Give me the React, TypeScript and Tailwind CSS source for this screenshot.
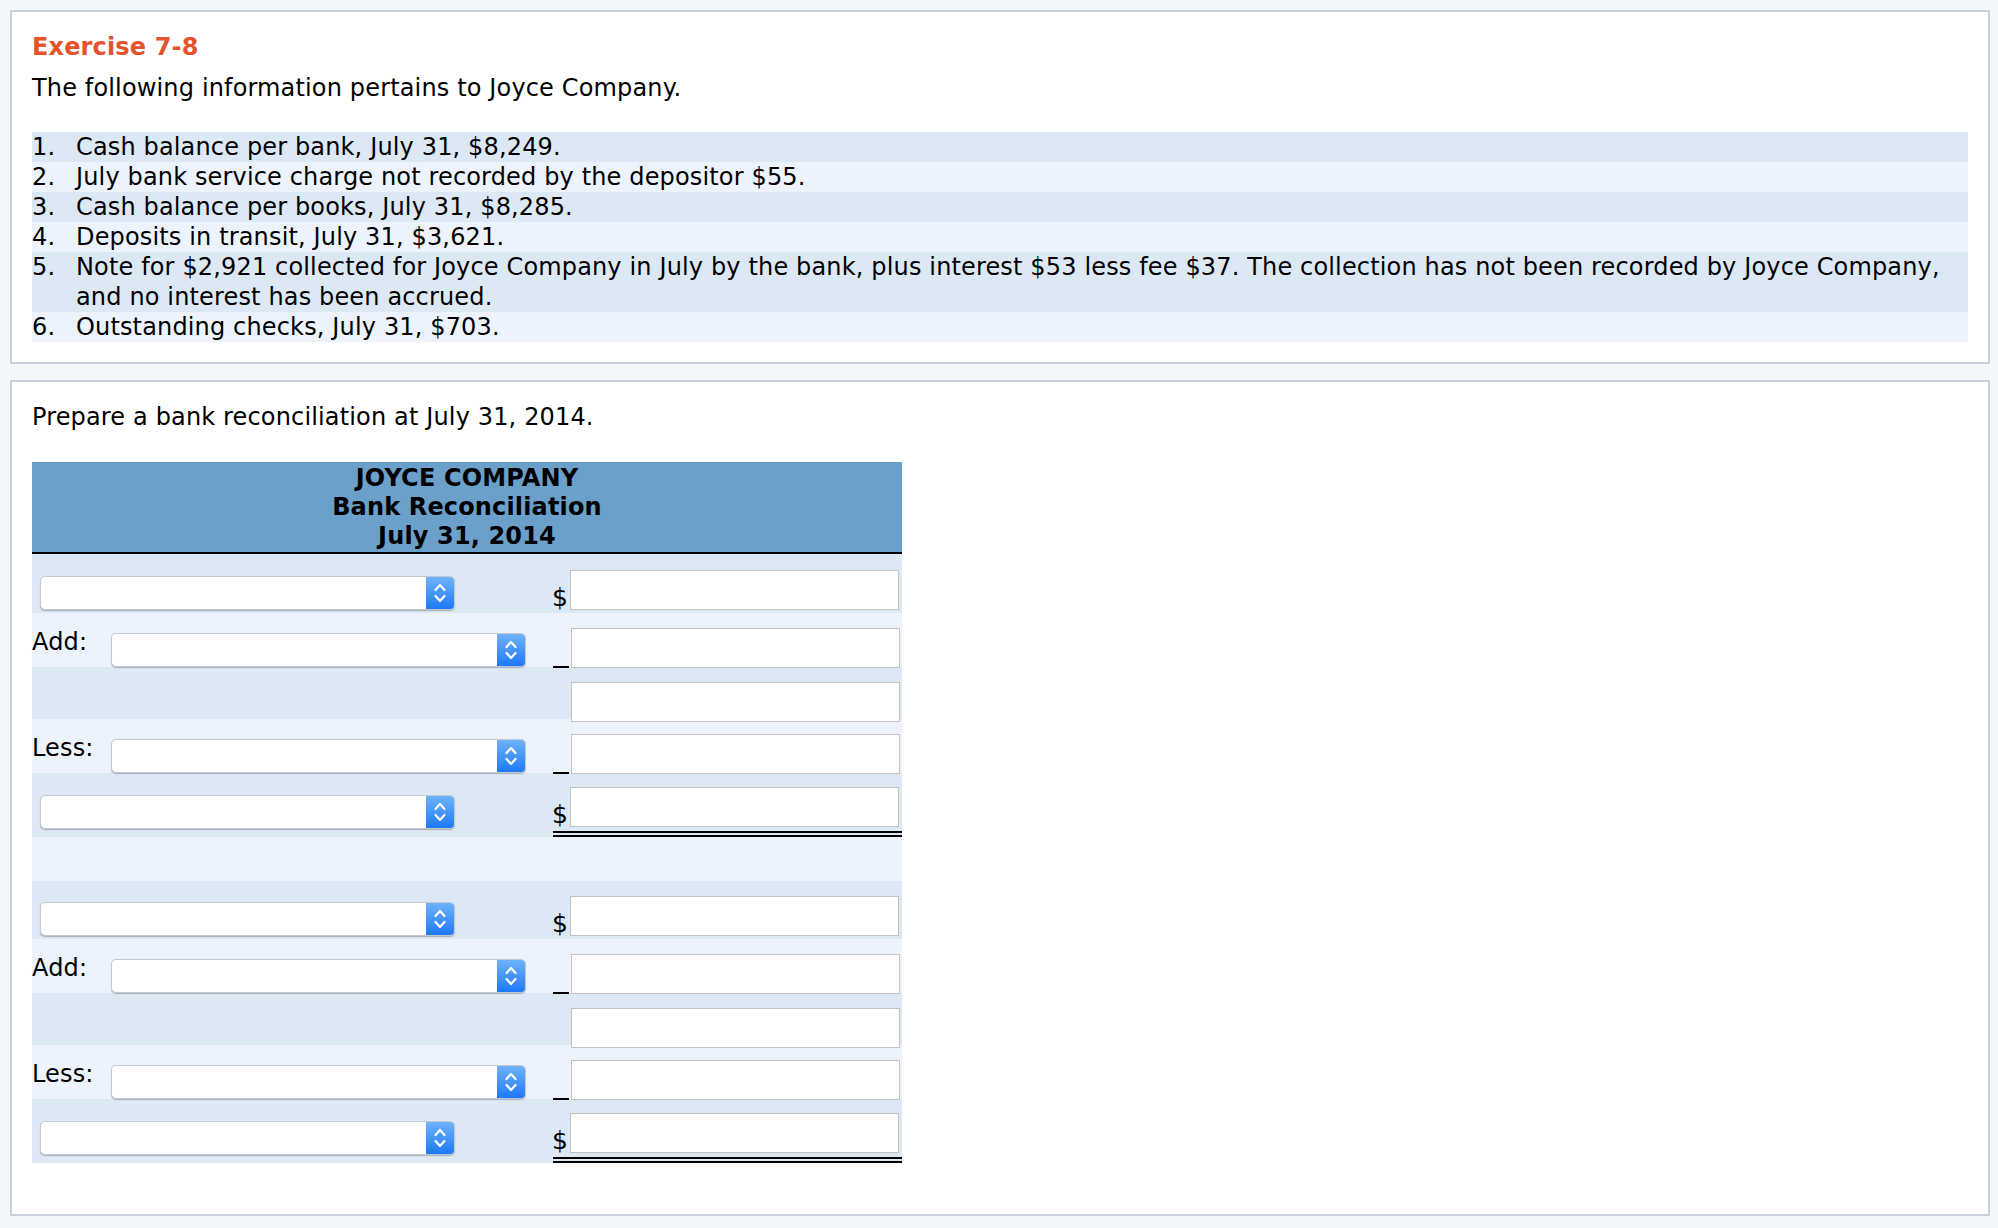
import React from "react";

const FONT = { fontFamily: '"DejaVu Sans", Verdana, sans-serif', letterSpacing: "0.15px" };

function Chevrons() {
  return (
    <svg width="14" height="24" viewBox="0 0 14 24" fill="none">
      <path d="M2.5 9 L7 4 L11.5 9" stroke="white" strokeWidth="2.2" strokeLinecap="round" strokeLinejoin="round" />
      <path d="M2.5 15 L7 20 L11.5 15" stroke="white" strokeWidth="2.2" strokeLinecap="round" strokeLinejoin="round" />
    </svg>
  );
}

function Select() {
  return (
    <div className="flex h-[34px] w-[415px] rounded-[5px] border border-[#c4c8cf] bg-white shadow-[0_1px_1px_rgba(0,0,0,0.25)] overflow-hidden">
      <div className="flex-1" />
      <div className="flex w-[28px] items-center justify-center bg-gradient-to-b from-[#6db2fb] to-[#1b78f6]">
        <Chevrons />
      </div>
    </div>
  );
}

function Input() {
  return <div className="h-[40px] w-[329px] border border-[#c2c2c2] bg-white" />;
}

type RowKind = "first" | "add" | "less" | "blank" | "total" | "empty";

function Row({ kind, h, dark }: { kind: RowKind; h: number; dark: boolean }) {
  const bg = dark ? "bg-[#dde8f5]" : "bg-[#ecf3fc]";
  if (kind === "empty") {
    return <div className={`${bg} w-[870px]`} style={{ height: h }} />;
  }
  const left =
    kind === "first" || kind === "total" ? (
      <div className={`flex w-[521px] items-end pl-[8px] ${kind === "total" ? "pb-[8px]" : "pb-0"}`}>
        <Select />
      </div>
    ) : kind === "add" || kind === "less" ? (
      <div className="flex w-[521px] items-start self-end">
        <div className="w-[79px] text-[24px] leading-[26px] -mt-[4px]">{kind === "add" ? "Add:" : "Less:"}</div>
        <Select />
      </div>
    ) : (
      <div className="w-[521px]" />
    );

  const mid =
    kind === "first" || kind === "total" ? (
      <div className="w-[18px] text-[25px] leading-none -ml-[1px]">$</div>
    ) : kind === "add" || kind === "less" ? (
      <div className="flex w-[18px] items-end">
        <div className="h-[2px] w-[16px] bg-black" />
      </div>
    ) : (
      <div className="w-[18px]" />
    );

  let pb = "pb-[3px]";
  let mb = "";
  if (kind === "add" || kind === "less") {
    pb = "pb-0";
    mb = "-mb-[1px]";
  }
  if (kind === "blank") {
    pb = "pb-0";
    mb = "-mb-[3px]";
  }

  if (kind === "total") {
    return (
      <div className={`${bg} flex w-[870px] items-end`} style={{ height: h }}>
        {left}
        <div className="flex flex-col">
          <div className="flex items-end">
            {mid}
            <Input />
          </div>
          <div className="mt-[4px] h-[2px] w-[349px] bg-black" />
          <div className="mt-[2px] h-[2px] w-[349px] bg-black" />
        </div>
      </div>
    );
  }

  return (
    <div className={`${bg} flex w-[870px] items-end ${pb}`} style={{ height: h }}>
      {left}
      <div className={`flex items-end ${mb}`}>
        {mid}
        <Input />
      </div>
    </div>
  );
}

const rows: { kind: RowKind; h: number; dark: boolean }[] = [
  { kind: "first", h: 59, dark: true },
  { kind: "add", h: 54, dark: false },
  { kind: "blank", h: 52, dark: true },
  { kind: "less", h: 54, dark: false },
  { kind: "total", h: 64, dark: true },
  { kind: "empty", h: 44, dark: false },
  { kind: "first", h: 58, dark: true },
  { kind: "add", h: 54, dark: false },
  { kind: "blank", h: 52, dark: true },
  { kind: "less", h: 54, dark: false },
  { kind: "total", h: 64, dark: true },
];

const items: { n: string; lines: string[] }[] = [
  { n: "1.", lines: ["Cash balance per bank, July 31, $8,249."] },
  { n: "2.", lines: ["July bank service charge not recorded by the depositor $55."] },
  { n: "3.", lines: ["Cash balance per books, July 31, $8,285."] },
  { n: "4.", lines: ["Deposits in transit, July 31, $3,621."] },
  {
    n: "5.",
    lines: [
      "Note for $2,921 collected for Joyce Company in July by the bank, plus interest $53 less fee $37. The collection has not been recorded by Joyce Company,",
      "and no interest has been accrued.",
    ],
  },
  { n: "6.", lines: ["Outstanding checks, July 31, $703."] },
];

export default function App() {
  return (
    <div className="min-h-screen bg-[#f4f7fa] pl-[10px] pr-[8px] pt-[10px] pb-[15px] text-black" style={FONT}>
      <div className="border-2 border-[#c9d0dc] bg-white px-[20px] pt-[20px] pb-[20px]">
        <div className="text-[24px] font-bold leading-[30px] text-[#e4532b]">Exercise 7-8</div>
        <div className="mt-[11px] text-[24px] leading-[30px]">The following information pertains to Joyce Company.</div>
        <div className="mt-[29px]">
          {items.map((it, i) => (
            <div key={i} className={`flex text-[24px] leading-[30px] ${i % 2 === 0 ? "bg-[#dde8f5]" : "bg-[#ecf3fc]"}`}>
              <div className="w-[44px] shrink-0">{it.n}</div>
              <div>
                {it.lines.map((l, j) => (
                  <div key={j} className="whitespace-nowrap">{l}</div>
                ))}
              </div>
            </div>
          ))}
        </div>
      </div>

      <div className="mt-[16px] border-2 border-[#c9d0dc] bg-white px-[20px] pt-[20px] pb-[51px]">
        <div className="text-[24px] leading-[30px]">Prepare a bank reconciliation at July 31, 2014.</div>
        <div className="mt-[30px] w-[870px]">
          <div className="border-b-2 border-black bg-[#6ba0cb] pt-[2px] pb-[1px] text-center text-[24px] font-bold leading-[29px]">
            <div>JOYCE COMPANY</div>
            <div>Bank Reconciliation</div>
            <div>July 31, 2014</div>
          </div>
          {rows.map((r, i) => (
            <Row key={i} kind={r.kind} h={r.h} dark={r.dark} />
          ))}
        </div>
      </div>
    </div>
  );
}
